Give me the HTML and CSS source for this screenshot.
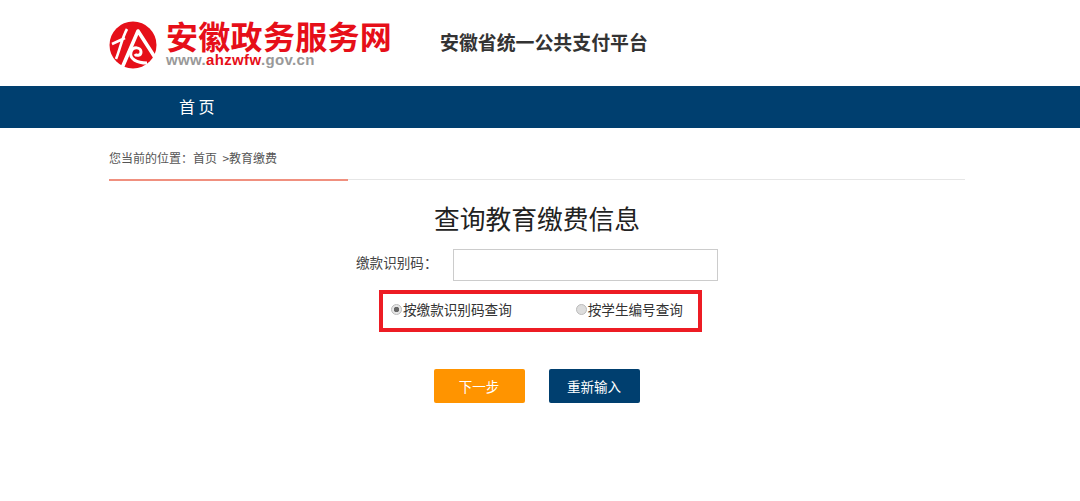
FILE: index.html
```html
<!DOCTYPE html>
<html lang="zh">
<head>
<meta charset="utf-8">
<title>安徽省统一公共支付平台</title>
<link rel="stylesheet" href="styles.css">
</head>
<body>
<header class="top">
  <svg class="emblem" viewBox="0 0 48 48" width="48" height="48" aria-hidden="true">
    <circle cx="24" cy="24" r="23.5" fill="#e60f19"/>
    <path d="M18 8 C13 17 11 28 7 38 M3 23 L16 17" stroke="#fff" stroke-width="2.6" fill="none"/>
    <path d="M13 47 L29 10 L47 38" stroke="#fff" stroke-width="3.6" fill="none" stroke-linejoin="round"/>
    <path d="M38 42 C28 42 20 38 22 31 C24 25 32 26 32 31 C32 35 27 35 26 33" stroke="#fff" stroke-width="3" fill="none"/>
  </svg>
  <div class="brand">
    <div class="brand-name">安徽政务服务网</div>
    <div class="brand-url">www.<span class="brand-accent">ahzwfw</span>.gov.cn</div>
  </div>
  <div class="platform">安徽省统一公共支付平台</div>
</header>
<nav class="nav"><a class="nav-item">首 页</a></nav>
<div class="crumbs">您当前的位置：首页 &nbsp;&gt;教育缴费</div>
<div class="rule"><div class="rule-red"></div></div>
<main class="main">
  <h1 class="title">查询教育缴费信息</h1>
  <div class="field">
    <label class="field-label">缴款识别码：</label>
    <input class="field-input" type="text">
  </div>
  <div class="radios">
    <label class="radio-item"><span class="radio on"></span>按缴款识别码查询</label>
    <label class="radio-item"><span class="radio"></span>按学生编号查询</label>
  </div>
  <div class="actions">
    <button class="btn btn-next">下一步</button>
    <button class="btn btn-reset">重新输入</button>
  </div>
</main>
</body>
</html>
```
FILE: styles.css
```css
* { box-sizing: border-box; }
html, body { margin: 0; padding: 0; }
body {
  height: 501px;
  overflow: hidden;
  background: #fff;
  font-family: "Noto Sans CJK SC", "Liberation Sans", sans-serif;
  color: #333;
}
.top {
  height: 86px;
  padding: 21px 0 0 109px;
  display: flex;
  align-items: flex-start;
}
.emblem { flex: none; }
.brand { margin-left: 9px; width: 274px; }
.brand-name {
  font-size: 32px;
  line-height: 28px;
  font-weight: 700;
  letter-spacing: 0.3px;
  color: #e60f19;
  white-space: nowrap;
}
.brand-url {
  margin-top: 3px;
  font-family: "Liberation Sans", sans-serif;
  font-size: 15px;
  line-height: 16px;
  font-weight: 700;
  letter-spacing: 0.35px;
  color: #999;
}
.brand-accent { color: #e60f19; }
.platform {
  margin-top: 8px;
  font-size: 18.9px;
  line-height: 26px;
  font-weight: 700;
  color: #333;
  white-space: nowrap;
}
.nav {
  height: 42px;
  background: #003f6f;
  padding-left: 179px;
}
.nav-item {
  font-size: 16px;
  line-height: 40px;
  color: #fff;
}
.crumbs {
  margin: 22px 0 0 109px;
  height: 16px;
  font-size: 12px;
  line-height: 16px;
  color: #555;
}
.rule {
  margin: 13px 115px 0 109px;
  height: 1px;
  background: #e6e6e6;
}
.rule-red {
  width: 239px;
  height: 2px;
  background: #f0907f;
}
.main {
  display: flex;
  flex-direction: column;
  align-items: center;
}
.title {
  margin: 21px 0 0 -6px;
  font-size: 25.75px;
  line-height: 34px;
  font-weight: 400;
  color: #222;
}
.field {
  margin: 14px 0 0 -6px;
  display: flex;
  align-items: center;
}
.field-label {
  width: 97px;
  padding-bottom: 7px;
  font-size: 13.6px;
  color: #444;
  white-space: nowrap;
}
.field-input {
  width: 265px;
  height: 32px;
  border: 1px solid #ccc;
  background: #fff;
  outline: none;
}
.radios {
  margin: 9px 0 0 1px;
  width: 323px;
  height: 42px;
  border: 4px solid #ed1c24;
  padding: 0 0 4px 8px;
  display: flex;
  align-items: center;
}
.radio-item {
  display: flex;
  align-items: center;
  font-size: 13.6px;
  color: #333;
  white-space: nowrap;
}
.radio-item + .radio-item { margin-left: 64px; }
.radio {
  width: 11px;
  height: 11px;
  border-radius: 50%;
  border: 1px solid #bbb;
  background: #ddd;
  margin-right: 1px;
}
.radio.on {
  background: radial-gradient(circle, #666 0 2.5px, #e6e6e6 3px);
}
.actions {
  margin: 37px 0 0 -7px;
  display: flex;
  gap: 24px;
}
.btn {
  width: 91px;
  height: 34px;
  border: 0;
  border-radius: 2px;
  color: #fff;
  font-family: inherit;
  font-size: 13.5px;
  padding: 0;
}
.btn-next { background: #ff9400; }
.btn-reset { background: #003f6f; }
```
